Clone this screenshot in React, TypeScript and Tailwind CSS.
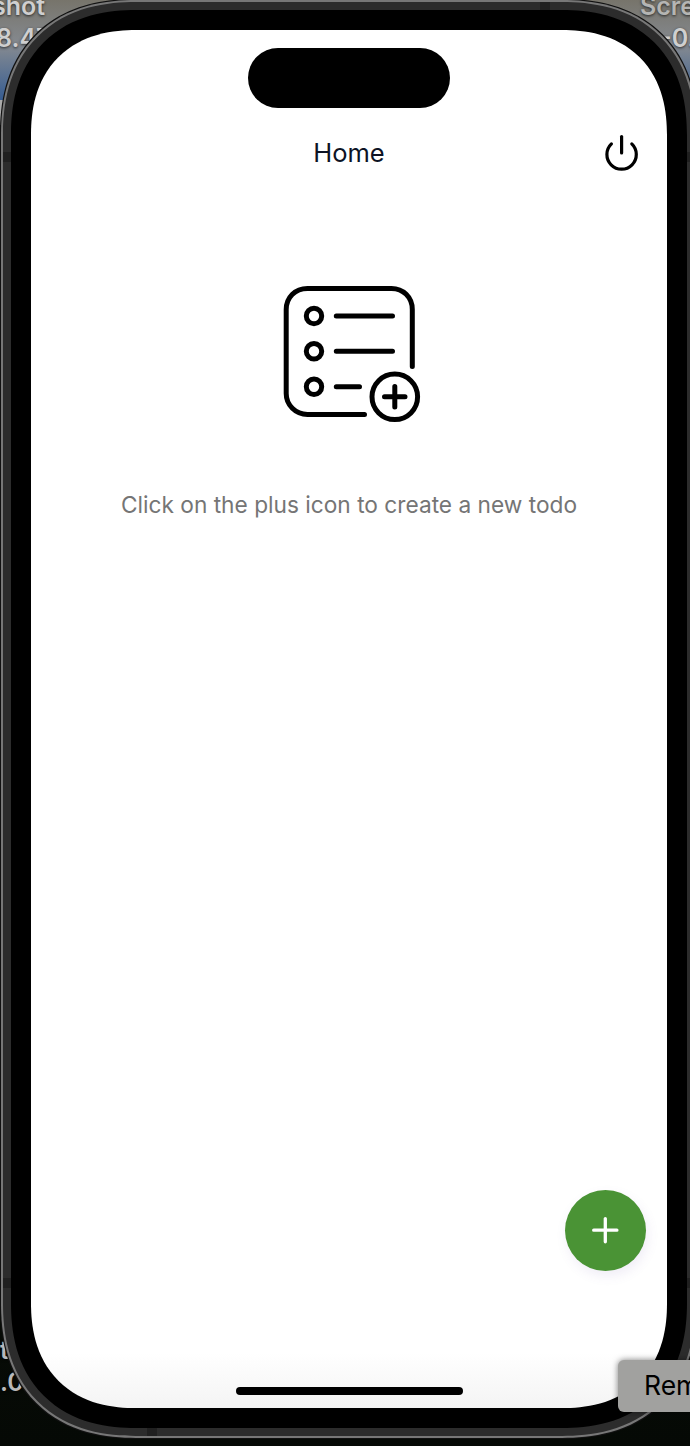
const corner = "[corner-shape:superellipse(1.2)]";

function ChecklistIcon() {
  return (
    <svg width="138" height="138" viewBox="283 285 138 138" fill="none" stroke="#000" strokeWidth="5" strokeLinecap="round">
      <path d="M412.3 366.5V309.5C412.3 297 403 288.4 391.5 288.4H307.5C295 288.4 286.2 297.5 286.2 309.5V393.5C286.2 405 295.5 414.4 307.5 414.4H364.5" />
      <circle cx="314" cy="316" r="7.7" />
      <circle cx="314" cy="351.3" r="7.7" />
      <circle cx="314" cy="386.7" r="7.7" />
      <path d="M336.3 316H392.5M336.3 351.3H392.5M336.3 386.7H359.5" />
      <circle cx="394.8" cy="396.8" r="22.8" />
      <path d="M384.5 396.8H405M394.8 386.5V407" />
    </svg>
  );
}

function PowerIcon() {
  return (
    <svg width="36" height="40" viewBox="604 133 36 40" fill="none" stroke="#000" strokeWidth="3.2" strokeLinecap="round">
      <path d="M621.6 136.5V153" />
      <path d="M611.4 143.9A14.7 14.7 0 1 0 631.8 143.9" />
    </svg>
  );
}

function Wallpaper() {
  return (
    <div className="absolute inset-0 flex flex-col justify-between text-[25px] font-semibold leading-8 text-[#cfcfcf] [text-shadow:0_1px_3px_#000000b3]">
      <div className="h-[125px] border-l-[3px] border-[#aaa]">
        <div className="-ml-[3px] flex h-[100px] justify-between bg-linear-to-b from-[#77746b] via-[#858a90] via-45% to-[#365c91]">
          <div className="-mt-2.5 flex flex-col">
            <span className="-ml-2">shot</span>
            <span className="-ml-1">8.47</span>
          </div>
          <div className="-mt-2.5 flex w-[50px] flex-col text-[#b5b5b3]">
            <span>Screen</span>
            <span className="pl-5 text-[#cfcfcf]">-0.0</span>
          </div>
        </div>
      </div>
      <div className="flex flex-col pb-12 text-[#b8b8b8]">
        <span>t</span>
        <span>.0</span>
      </div>
    </div>
  );
}

export default function App() {
  return (
    <main className="relative h-[1446px] w-[690px] overflow-hidden bg-linear-to-b from-[#25272a] via-[#17160e] via-50% to-[#050905] font-['Inter',sans-serif]">
      <Wallpaper />
      <div className={`relative ml-px h-[1438px] w-[696px] rounded-[135px] bg-[#777] p-0.5 shadow-[0_0_0_1px_#111] ${corner}`}>
        <div className={`h-full rounded-[133px] bg-[#2c2c2c] bg-[linear-gradient(#202020,#202020),linear-gradient(#202020,#202020),linear-gradient(#202020,#202020),linear-gradient(#202020,#202020)] bg-[length:100%_10px,100%_10px,10px_8px,10px_8px] bg-[position:0_150px,0_1276px,537px_0,144px_100%] bg-no-repeat p-2 ${corner}`}>
          <div className={`h-full rounded-[125px] bg-black p-5 ${corner}`}>
            <div className={`flex h-full flex-col items-center overflow-hidden rounded-[105px] bg-white bg-linear-to-b from-white from-96% to-[#f4f4f4] ${corner}`}>
              <div className="mt-[18px] h-[60px] w-[202px] shrink-0 rounded-full bg-black" />
              <header className="mt-[25px] grid w-full grid-cols-[1fr_auto_1fr] items-center">
                <h1 className="col-start-2 text-[25.5px] leading-10 text-[#0d1324]">Home</h1>
                <button aria-label="Power" className="mr-[27px] justify-self-end"><PowerIcon /></button>
              </header>
              <section className="mt-28 flex flex-col items-center gap-[66px]">
                <div className="pl-[6px]"><ChecklistIcon /></div>
                <p className="whitespace-nowrap text-[22.7px] leading-8 text-[#757575]">Click on the plus icon to create a new todo</p>
              </section>
              <footer className="mt-auto flex w-full flex-col items-center">
                <button aria-label="Add todo" className="mr-[21px] flex size-[81px] items-center justify-center self-end rounded-full bg-[#4a9335] shadow-[2px_5px_12px_#6750a41a]">
                  <svg width="29" height="29" viewBox="0 0 29 29" stroke="#fff" strokeWidth="3.3" strokeLinecap="round"><path d="M2.7 14.2H25.9M14.3 2.6V25.8" /></svg>
                </button>
                <div className="mb-[13px] mt-[116px] h-2 w-[227px] rounded-full bg-black" />
              </footer>
            </div>
          </div>
        </div>
      </div>
      <button className="absolute left-[618px] top-[1360px] h-[52px] w-[130px] rounded-md bg-[#a1a19f] pl-[26px] text-left text-[26.5px] text-black shadow-[0_0_6px_#00000080]">Remove</button>
    </main>
  );
}
